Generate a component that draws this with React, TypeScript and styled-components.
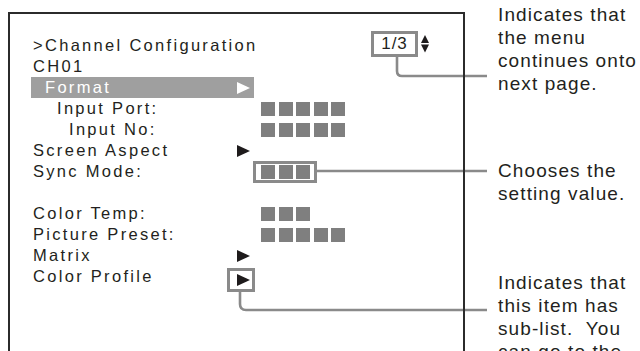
import React from 'react';
import styled, { createGlobalStyle } from 'styled-components';

const GlobalStyle = createGlobalStyle`
  html, body {
    margin: 0;
    padding: 0;
    background: #fff;
  }
  body {
    width: 640px;
    height: 351px;
    overflow: hidden;
    font-family: "Liberation Sans", Arial, Helvetica, sans-serif;
    color: #231f20;
  }
`;

const Figure = styled.div`
  position: relative;
  width: 640px;
  height: 351px;
  overflow: hidden;
  display: flex;
  align-items: flex-start;
`;

const Leaders = styled.svg`
  position: absolute;
  inset: 0;
  z-index: 0;
  pointer-events: none;
`;

const Screen = styled.div`
  position: relative;
  z-index: 1;
  flex-shrink: 0;
  box-sizing: border-box;
  width: 457px;
  height: 360px;
  margin: 12px 0 0 8px;
  padding: 21px 0 0 23px;
  border: 2px solid #2b2b2b;
  border-bottom: none;
  font-size: 16.5px;
  line-height: 21px;
  letter-spacing: 2.3px;
`;

const Row = styled.div<{ $active?: boolean }>`
  display: flex;
  align-items: center;
  box-sizing: border-box;
  height: 21px;
  white-space: nowrap;
  ${(p) =>
    p.$active &&
    `
    width: 223px;
    margin-left: -2px;
    padding-left: 2px;
    background: #9f9f9f;
    color: #fff;
  `}
`;

const HeaderRow = styled(Row)`
  padding-right: 34px;
`;

const Spacer = styled.div`
  height: 21px;
`;

const Label = styled.span<{ $indent: number }>`
  flex-shrink: 0;
  box-sizing: border-box;
  width: 204px;
  padding-left: ${(p) => p.$indent * 12}px;
`;

const Arrow = styled.span<{ $light?: boolean }>`
  display: block;
  width: 0;
  height: 0;
  border-left: 13px solid ${(p) => (p.$light ? '#fff' : '#1e1b1c')};
  border-top: 6.5px solid transparent;
  border-bottom: 6.5px solid transparent;
`;

const Blocks = styled.span<{ $offset: number }>`
  display: flex;
  gap: 3.5px;
  margin-left: ${(p) => p.$offset}px;
`;

const Block = styled.span`
  width: 14px;
  height: 14px;
  background: #7f7f7f;
`;

const SelectBox = styled.span`
  display: flex;
  margin-left: 16px;
  padding: 1px 4px 1px 5px;
  border: 3px solid #8a8a8a;
  background: #fff;
`;

const SubBox = styled.span`
  display: flex;
  margin: 6px 0 0 -10px;
  padding: 3px 2px 3px 7px;
  border: 3px solid #8a8a8a;
  background: #fff;
`;

const Pager = styled.span`
  display: flex;
  align-items: center;
  gap: 3px;
  margin: 0 0 3px auto;
`;

const PageBox = styled.span`
  box-sizing: border-box;
  width: 47px;
  height: 26px;
  border: 3px solid #8a8a8a;
  background: #fff;
  font-size: 17px;
  line-height: 20px;
  letter-spacing: 1px;
  text-align: center;
`;

const Notes = styled.div`
  display: flex;
  flex-direction: column;
  margin-left: 33px;
  padding-top: 3px;
  font-size: 19px;
  line-height: 23px;
  letter-spacing: 1.1px;
  white-space: pre;
`;

const Note = styled.p<{ $gap: number }>`
  margin: ${(p) => p.$gap}px 0 0;
`;

type Value =
  | { kind: 'none' }
  | { kind: 'arrow' }
  | { kind: 'blocks'; count: number }
  | { kind: 'select'; count: number }
  | { kind: 'sub' };

type Item = { label: string; indent: number; value: Value; active?: boolean } | null;

const items: Item[] = [
  { label: 'CH01', indent: 0, value: { kind: 'none' } },
  { label: 'Format', indent: 1, value: { kind: 'arrow' }, active: true },
  { label: 'Input Port:', indent: 2, value: { kind: 'blocks', count: 5 } },
  { label: 'Input No:', indent: 3, value: { kind: 'blocks', count: 5 } },
  { label: 'Screen Aspect', indent: 0, value: { kind: 'arrow' } },
  { label: 'Sync Mode:', indent: 0, value: { kind: 'select', count: 3 } },
  null,
  { label: 'Color Temp:', indent: 0, value: { kind: 'blocks', count: 3 } },
  { label: 'Picture Preset:', indent: 0, value: { kind: 'blocks', count: 5 } },
  { label: 'Matrix', indent: 0, value: { kind: 'arrow' } },
  { label: 'Color Profile', indent: 0, value: { kind: 'sub' } },
];

const notes = [
  { gap: 0, lines: ['Indicates that', 'the menu', 'continues onto', 'next page.'] },
  { gap: 64, lines: ['Chooses the', 'setting value.'] },
  { gap: 66, lines: ['Indicates that', 'this item has', 'sub-list.  You', 'can go to the'] },
];

const squares = (n: number) => Array.from({ length: n }, (_, i) => <Block key={i} />);

const renderValue = (v: Value, active?: boolean) => {
  switch (v.kind) {
    case 'arrow':
      return <Arrow $light={active} />;
    case 'blocks':
      return <Blocks $offset={24}>{squares(v.count)}</Blocks>;
    case 'select':
      return (
        <SelectBox>
          <Blocks $offset={0}>{squares(v.count)}</Blocks>
        </SelectBox>
      );
    case 'sub':
      return (
        <SubBox>
          <Arrow />
        </SubBox>
      );
    default:
      return null;
  }
};

const UpDown = () => (
  <svg width="8" height="18" viewBox="0 0 8 18">
    <polygon points="4,0 8,8 0,8" fill="#1e1b1c" />
    <polygon points="0,9.5 8,9.5 4,17.5" fill="#1e1b1c" />
  </svg>
);

export default function App() {
  return (
    <Figure>
      <GlobalStyle />
      <Leaders width="640" height="351" viewBox="0 0 640 351">
        <g fill="none" stroke="#8a8a8a" strokeWidth="2.6">
          <path d="M397 57 V71 Q397 76 402 76 H487" />
          <path d="M317 171 H487" />
          <path d="M240 292 V304 Q240 310 246 310 H487" />
        </g>
      </Leaders>
      <Screen>
        <HeaderRow>
          <span>&gt;Channel Configuration</span>
          <Pager>
            <PageBox>1/3</PageBox>
            <UpDown />
          </Pager>
        </HeaderRow>
        {items.map((item, i) =>
          item ? (
            <Row key={i} $active={item.active}>
              <Label $indent={item.indent}>{item.label}</Label>
              {renderValue(item.value, item.active)}
            </Row>
          ) : (
            <Spacer key={i} />
          )
        )}
      </Screen>
      <Notes>
        {notes.map((n, i) => (
          <Note key={i} $gap={n.gap}>
            {n.lines.join('\n')}
          </Note>
        ))}
      </Notes>
    </Figure>
  );
}
